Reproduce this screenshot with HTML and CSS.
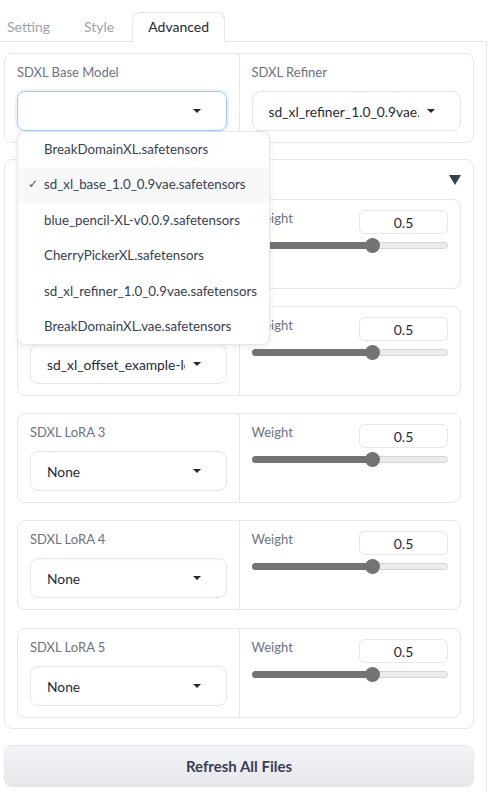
FILE: index.html
```html
<!DOCTYPE html>
<html lang="en">
<head>
    <meta charset="UTF-8">
    <meta name="viewport" content="width=device-width, initial-scale=1.0">
    <title>SDXL - Advanced</title>
    <link rel="stylesheet" href="styles.css">
</head>
<body>
    <div class="tabs">
        <div class="tab-nav">
            <button class="tab">Setting</button>
            <button class="tab">Style</button>
            <button class="tab selected">Advanced</button>
        </div>
        <div class="tab-panel">
            <div class="block split">
                <div class="col">
                    <span class="label">SDXL Base Model</span>
                    <div class="dropdown focused">
                        <span class="value"></span>
                        <span class="caret"></span>
                    </div>
                    <ul class="menu">
                        <li>BreakDomainXL.safetensors</li>
                        <li class="active"><span class="check">✓</span>sd_xl_base_1.0_0.9vae.safetensors</li>
                        <li>blue_pencil-XL-v0.0.9.safetensors</li>
                        <li>CherryPickerXL.safetensors</li>
                        <li>sd_xl_refiner_1.0_0.9vae.safetensors</li>
                        <li>BreakDomainXL.vae.safetensors</li>
                    </ul>
                </div>
                <div class="col">
                    <span class="label">SDXL Refiner</span>
                    <div class="dropdown">
                        <span class="value">sd_xl_refiner_1.0_0.9vae.safetensors</span>
                        <span class="caret"></span>
                    </div>
                </div>
            </div>

            <div class="block accordion">
                <div class="acc-head">
                    <span class="acc-title">SDXL LoRA</span>
                    <svg class="acc-icon" width="12" height="10" viewBox="0 0 12 10"><polygon points="0,0 12,0 6,10" fill="#374151"/></svg>
                </div>
                <div class="lora-list">
                    <div class="block split lora">
                        <div class="col">
                            <span class="label">SDXL LoRA 1</span>
                            <div class="dropdown"><span class="value">sd_xl_offset_example-lora_1.0.safetensors</span><span class="caret"></span></div>
                        </div>
                        <div class="col">
                            <div class="weight-head"><span class="label">Weight</span><input class="num" type="text" value="0.5"></div>
                            <div class="slider" style="--p: 0.625"><div class="fill"></div><div class="thumb"></div></div>
                        </div>
                    </div>
                    <div class="block split lora">
                        <div class="col">
                            <span class="label">SDXL LoRA 2</span>
                            <div class="dropdown"><span class="value">sd_xl_offset_example-lora_1.0.safetensors</span><span class="caret"></span></div>
                        </div>
                        <div class="col">
                            <div class="weight-head"><span class="label">Weight</span><input class="num" type="text" value="0.5"></div>
                            <div class="slider" style="--p: 0.625"><div class="fill"></div><div class="thumb"></div></div>
                        </div>
                    </div>
                    <div class="block split lora">
                        <div class="col">
                            <span class="label">SDXL LoRA 3</span>
                            <div class="dropdown"><span class="value">None</span><span class="caret"></span></div>
                        </div>
                        <div class="col">
                            <div class="weight-head"><span class="label">Weight</span><input class="num" type="text" value="0.5"></div>
                            <div class="slider" style="--p: 0.625"><div class="fill"></div><div class="thumb"></div></div>
                        </div>
                    </div>
                    <div class="block split lora">
                        <div class="col">
                            <span class="label">SDXL LoRA 4</span>
                            <div class="dropdown"><span class="value">None</span><span class="caret"></span></div>
                        </div>
                        <div class="col">
                            <div class="weight-head"><span class="label">Weight</span><input class="num" type="text" value="0.5"></div>
                            <div class="slider" style="--p: 0.625"><div class="fill"></div><div class="thumb"></div></div>
                        </div>
                    </div>
                    <div class="block split lora">
                        <div class="col">
                            <span class="label">SDXL LoRA 5</span>
                            <div class="dropdown"><span class="value">None</span><span class="caret"></span></div>
                        </div>
                        <div class="col">
                            <div class="weight-head"><span class="label">Weight</span><input class="num" type="text" value="0.5"></div>
                            <div class="slider" style="--p: 0.625"><div class="fill"></div><div class="thumb"></div></div>
                        </div>
                    </div>
                </div>
            </div>

            <button class="refresh">Refresh All Files</button>
        </div>
    </div>
</body>
</html>
```

FILE: styles.css
```css
html, body {
    overflow: hidden;
}
body {
    font-family: Lato, 'Noto Sans', sans-serif;
    font-size: 14px;
    color: #1f2937;
    background-color: white;
    margin: 0;
    padding: 0;
}
.tabs {
    margin-left: -9px;
    width: 496px;
}
.tab-nav {
    display: flex;
    gap: 2px;
    padding-top: 12px;
    border-bottom: 1px solid #e5e7eb;
}
.tab {
    font: inherit;
    font-size: 14px;
    color: #9ca3af;
    background: none;
    border: 1px solid transparent;
    border-bottom: none;
    border-radius: 8px 8px 0 0;
    padding: 0 15px 2px;
    height: 29px;
    margin-bottom: -1px;
}
.tab.selected {
    color: #1f2937;
    background-color: white;
    border-color: #e5e7eb;
    height: 30px;
}
.tab-panel {
    border: 1px solid #e5e7eb;
    border-top: none;
    padding: 11px 12px 12px;
    display: flex;
    flex-direction: column;
    gap: 16px;
}
.block {
    border: 1px solid #e5e7eb;
    border-radius: 8px;
    background-color: white;
}
.split {
    display: flex;
}
.col {
    flex: 1 1 0;
    min-width: 0;
    padding: 9px 12px 11px;
    position: relative;
}
.col + .col {
    border-left: 1px solid #e5e7eb;
}
.label {
    display: block;
    color: #6b7280;
    font-size: 13px;
    line-height: 18px;
    margin-bottom: 10px;
}
.dropdown {
    display: flex;
    align-items: center;
    height: 40px;
    box-sizing: border-box;
    border: 1px solid #e5e7eb;
    border-radius: 8px;
    padding: 0 25px 0 16px;
    box-shadow: inset 0 1px 2px rgba(0, 0, 0, 0.03);
}
.dropdown.focused {
    border-color: #9fcbfb;
    box-shadow: 0 0 0 2px rgba(191, 219, 254, 0.35);
}
.value {
    flex: 1;
    overflow: hidden;
    white-space: nowrap;
    color: #1f2937;
    font-size: 13.8px;
}
.caret {
    width: 0;
    height: 0;
    margin-left: 8px;
    border-left: 4px solid transparent;
    border-right: 4px solid transparent;
    border-top: 4px solid #1f2937;
}
.menu {
    position: absolute;
    left: 12px;
    top: 77px;
    width: 251px;
    margin: 0;
    padding: 0;
    list-style: none;
    background-color: white;
    border: 1px solid #e5e7eb;
    border-radius: 8px;
    box-shadow: 0 2px 6px rgba(0, 0, 0, 0.08);
    z-index: 10;
    overflow: hidden;
}
.menu li {
    height: 35.4px;
    line-height: 35.4px;
    padding-left: 26px;
    font-size: 13.3px;
    color: #374151;
    white-space: nowrap;
    position: relative;
}
.menu li.active {
    background-color: #f7f8f9;
}
.check {
    position: absolute;
    left: 10px;
    font-size: 12px;
    font-family: 'DejaVu Sans', sans-serif;
    color: #4b5563;
}
.accordion {
    padding: 10px 12px 10px;
}
.acc-head {
    display: flex;
    justify-content: space-between;
    align-items: center;
    height: 20px;
    margin-bottom: 9px;
}
.acc-title {
    color: #374151;
}
.lora-list {
    display: flex;
    flex-direction: column;
    gap: 17px;
}
.lora:last-child {
    margin-top: 1px;
}
.weight-head {
    display: flex;
    justify-content: space-between;
    align-items: flex-start;
}
.weight-head .label {
    margin-bottom: 0;
}
.num {
    width: 89px;
    height: 24px;
    box-sizing: border-box;
    margin-top: 1px;
    border: 1px solid #e5e7eb;
    border-radius: 6px;
    font: inherit;
    font-size: 14px;
    color: #1f2937;
    text-align: center;
    padding: 0;
}
.slider {
    position: relative;
    height: 15px;
    margin-top: 4px;
}
.slider::before {
    content: '';
    position: absolute;
    left: 0;
    right: 0;
    top: 4px;
    height: 7px;
    box-sizing: border-box;
    border: 1px solid #d4d4d8;
    background-color: #ececee;
    border-radius: 4px;
}
.fill {
    position: absolute;
    left: 0;
    top: 4px;
    height: 7px;
    width: calc(var(--p) * (100% - 15px) + 7px);
    background-color: #737373;
    border-radius: 4px 0 0 4px;
}
.thumb {
    position: absolute;
    top: 0;
    left: calc(var(--p) * (100% - 15px));
    width: 15px;
    height: 15px;
    border-radius: 50%;
    background-color: #737373;
}
.refresh {
    font: inherit;
    font-size: 15px;
    font-weight: 700;
    color: #374151;
    height: 42px;
    border: 1px solid #e5e7eb;
    border-radius: 8px;
    background: linear-gradient(to bottom, #f3f4f6, #e7e8ec);
    cursor: pointer;
}
```
